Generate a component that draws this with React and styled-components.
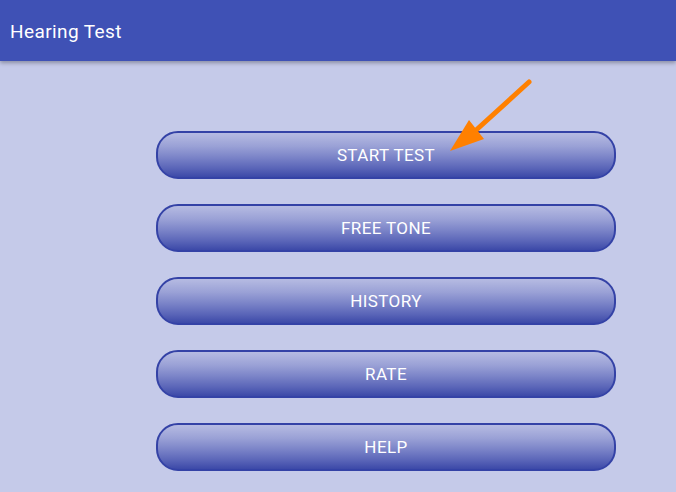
import React from "react";
import styled, { createGlobalStyle } from "styled-components";

const GlobalStyle = createGlobalStyle`
  html, body {
    margin: 0;
    padding: 0;
    background: #c5cae9;
    font-family: Roboto, "Liberation Sans", sans-serif;
  }
`;

const Page = styled.div`
  position: relative;
  width: 676px;
  height: 492px;
  overflow: hidden;
  background: #c5cae9;
`;

const Toolbar = styled.header`
  height: 61px;
  display: flex;
  align-items: center;
  padding-left: 10px;
  background: #3f51b5;
  box-shadow: 0 2px 4px rgba(0, 0, 0, 0.3);
`;

const Title = styled.h1`
  margin: 0;
  color: #fff;
  font-size: 19px;
  font-weight: 400;
  letter-spacing: 0.4px;
  padding-top: 2px;
`;

const Menu = styled.div`
  display: flex;
  flex-direction: column;
  gap: 25px;
  padding: 70px 0 0 156px;
`;

const MenuButton = styled.button`
  width: 460px;
  height: 48px;
  box-sizing: border-box;
  border: 2px solid #3442a6;
  border-radius: 22px;
  background: linear-gradient(
    to bottom,
    #b6bbe2 0%,
    #9aa1d6 30%,
    #7b84c8 55%,
    #5a65b8 80%,
    #3c49a8 100%
  );
  color: #fff;
  font-family: Roboto, "Liberation Sans", sans-serif;
  font-size: 17px;
  letter-spacing: 0.4px;
  text-transform: uppercase;
  padding: 0;
  cursor: pointer;
`;

const Arrow = styled.svg`
  position: absolute;
  left: 440px;
  top: 70px;
  width: 100px;
  height: 90px;
`;

const items = ["Start Test", "Free Tone", "History", "Rate", "Help"];

export default function App() {
  return (
    <Page>
      <GlobalStyle />
      <Toolbar>
        <Title>Hearing Test</Title>
      </Toolbar>
      <Menu>
        {items.map((label) => (
          <MenuButton key={label}>{label}</MenuButton>
        ))}
      </Menu>
      <Arrow viewBox="440 70 100 90">
        <line x1="529" y1="82" x2="474" y2="132" stroke="#ff8000" strokeWidth="5" strokeLinecap="round" />
        <polygon points="450,151 469,120 484,139" fill="#ff8000" />
      </Arrow>
    </Page>
  );
}
